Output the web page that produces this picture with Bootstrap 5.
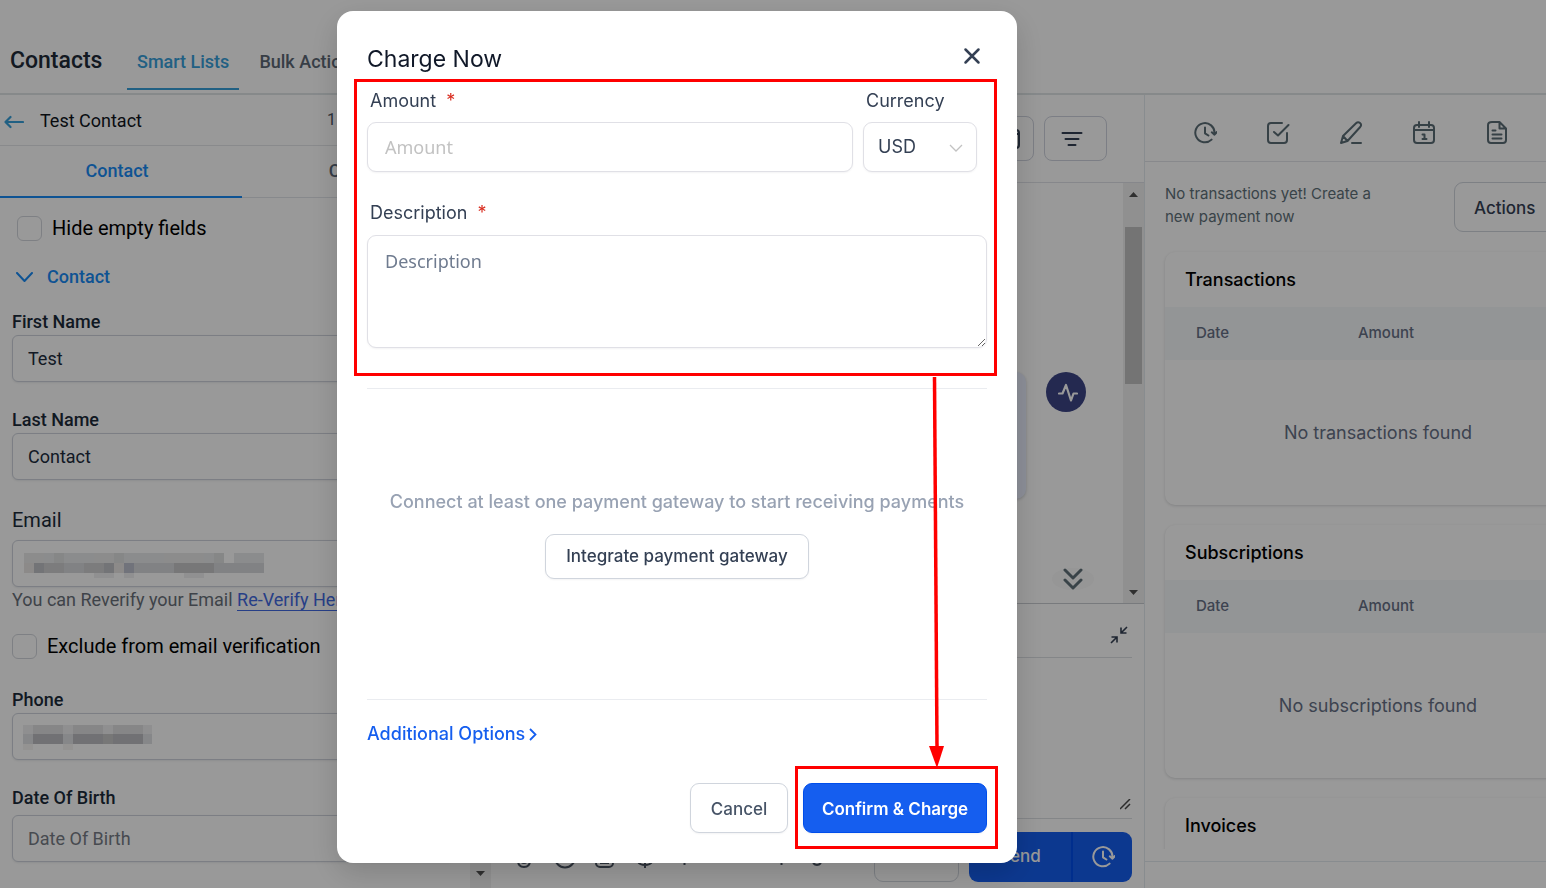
<!DOCTYPE html>
<html lang="en">
<head>
<meta charset="utf-8">
<meta name="viewport" content="width=device-width, initial-scale=1">
<title>Contacts - Charge Now</title>
<link href="https://cdn.jsdelivr.net/npm/bootstrap@5.3.0/dist/css/bootstrap.min.css" rel="stylesheet">
<style>
  body { font-family: Roboto, sans-serif; color: #1c2733; background: #fff; }
  svg { display: block; flex: none; }
  .inter { font-family: Inter, sans-serif; }
  .gap-10 { gap: 10px; }

  /* top bar */
  .topbar { flex: none; height: 95px; border-bottom: 2px solid #dfe5e7; padding: 0 0 3px 10px; }
  .topbar h1 { font-size: 23px; font-weight: 500; line-height: 30px; width: 117px; margin: 0 0 14px; color: #212b38; }
  .top-tab { font-size: 18px; font-weight: 500; line-height: 26px; padding: 0 10px 13px; color: #5d6875; border-bottom: 2px solid transparent; text-decoration: none; white-space: nowrap; }
  .top-tab.active { color: #38a0db; border-color: #38a0db; }

  /* contact form */
  .contact-pane { flex: 0 0 491px; font-size: 18px; }
  .pane-head { height: 51px; border-bottom: 1px solid #e4e6e9; padding-left: 4px; gap: 16px; color: #10151c; }
  .who { width: 271px; }
  .count { font-size: 16px; color: #4b5563; }
  .half-tab { flex: 0 0 242px; height: 52px; line-height: 50px; font-weight: 500; text-decoration: none; text-align: center; color: #5a6778; border-bottom: 1px solid #e2e5ea; }
  .half-tab.active { color: #188bf6; border-bottom: 2px solid #188bf6; }
  .form-area { padding: 18px 15px 0 12px; }
  .hide-row { padding-left: 5px; }
  .tick { appearance: none; width: 25px; height: 25px; margin: 0; border: 1px solid #d3d6dc; border-radius: 6px; background: #fff; flex: none; }
  .tick-label { font-size: 20px; line-height: 25px; color: #000; }
  .field { margin-bottom: 25px; }
  .field label { display: block; font-weight: 500; line-height: 26px; color: #1c2b3a; }
  .field label.roomy { padding-bottom: 4px; }
  .field label.title { font-size: 20px; font-weight: 400; padding: 2px 0 7px; }
  .field input { height: 47px; font-size: 18px; border: 1px solid #cfd3dc; border-radius: 6px; padding: 0 15px; color: #202b3c; box-shadow: 0 1px 2px rgba(16,24,40,.08); }
  .field input::placeholder { color: #777c85; opacity: 1; }
  .field.email { margin-bottom: 21px; }
  .section-row { margin: 23px 0 19px; gap: 14px; }
  .section-link { color: #188bf6; font-weight: 500; line-height: 26px; text-decoration: none; }
  .verify { line-height: 26px; color: #69707a; white-space: nowrap; }
  .verify a { color: #4169e1; text-decoration: none; border-bottom: 1px solid #4169e1; }
  .redacted { position: absolute; left: 11px; top: 12px; }
  .track { width: 21px; background: #f1f1f1; flex: none; }
  .track.tall { padding: 5px 0 4px; }

  /* conversation */
  .convo-pane { min-width: 0; }
  .convo-tools { height: 88px; border-bottom: 1px solid #e0e2e8; padding-right: 37px; }
  .tool-btn { width: 63px; height: 45px; border: 1px solid #cfd3de; border-radius: 8px; background: #fff; padding: 0; color: #344054; }
  .convo-list { height: 421px; border-bottom: 1px solid #c9ccd1; }
  .event-row { gap: 20px; padding: 189px 37px 0 0; }
  .jump-row { padding: 69px 29px 0 0; }
  .bubble { height: 127px; width: 400px; border-radius: 10px; background: #ebf0ff; box-shadow: 0 1px 3px rgba(16,24,40,.2); }
  .activity { width: 40px; height: 40px; border-radius: 50%; background: #3c4586; }
  .jump { width: 42px; height: 22px; border-radius: 50%; background: #fafafa; border: 0; padding: 0; color: #607179; }
  .thumb { width: 17px; height: 157px; background: #c1c1c1; margin-top: 30px; }
  .composer { margin-right: 12px; }
  .composer-head { height: 54px; border-bottom: 1px solid #dcdfe3; }
  .composer textarea { height: 161px; border: 0; border-bottom: 1px solid #dcdfe3; display: block; width: 100%; resize: none; }
  .composer-foot { height: 50px; margin-top: 13px; color: #4b5563; font-size: 17px; }
  .clear-btn { width: 85px; height: 50px; border: 1px solid #d0d5dd; border-radius: 9px; background: #fff; color: #475467; }
  .send-btn { height: 50px; background: #155eef; border: 0; color: #fff; font-weight: 500; font-size: 17px; padding: 0; }
  .send-main { width: 103px; border-radius: 9px 0 0 9px; border-right: 1px solid #004eeb; }
  .send-later { width: 60px; border-radius: 0 9px 9px 0; border-left: 1px solid #004eeb; }

  /* payments */
  .pay-pane { flex: 0 0 402px; border-left: 1px solid #e3e9ee; background: #fff; }
  .icon-row { flex: none; height: 67px; border-bottom: 1px solid #e3e5ea; padding: 10px 0 0 48px; gap: 49px; color: #5b6d76; }
  .icon-row button { border: 0; background: none; padding: 0; color: inherit; width: 24px; }
  .pay-body { width: 446px; padding: 20px 0 0 20px; }
  .pay-intro { font-size: 15px; line-height: 23px; width: 230px; color: #607179; margin: 0; }
  .actions-btn { width: 137px; height: 50px; border: 1px solid #d0d5dd; border-radius: 9px; background: #fff; font-size: 17px; font-weight: 500; color: #344054; text-align: left; padding: 3px 0 0 19px; }
  .pay-card { height: 253px; margin-bottom: 20px; border-radius: 10px; background: #fff; box-shadow: 0 1px 3px rgba(16,24,40,.16); overflow: hidden; }
  .pay-card h2 { font-size: 18px; font-weight: 500; line-height: 24px; height: 55px; padding: 16px 0 0 20px; margin: 0; color: #000; }
  .pay-card table { width: 100%; font-size: 15px; }
  .pay-card th { background: #f6f8fb; height: 53px; font-weight: 500; color: #667085; padding-left: 31px; width: 38%; }
  .pay-card td { height: 145px; text-align: center; font-size: 18px; color: #667085; }
  .pay-foot { border-top: 1px solid #e3e9ee; height: 27px; margin-top: 12px; flex: none; }

  /* dialog */
  .veil { position: fixed; inset: 0; background: rgba(0,0,0,.4); padding: 11px 192px 0 0; overflow: hidden; }
  .charge { width: 680px; margin: 0 auto; background: #fff; border-radius: 16px; padding: 30px; position: relative; font-size: 18px; color: #344054; box-shadow: 0 10px 30px rgba(0,0,0,.16); }
  .charge h2 { font-size: 23px; line-height: 36px; margin: 0; font-weight: 400; color: #101828; }
  .charge label { line-height: 24px; padding-left: 3px; }
  .charge .star { color: #d92d20; margin-left: 10px; }
  .close-x { border: 0; background: none; padding: 0 4px 6px; }
  .pay-row { gap: 10px; padding: 12px 10px 0 0; }
  .stack { gap: 9px; }
  .desc-row { gap: 10px; padding: 29px 0 40px; }
  .box { border: 1px solid #e0e0e6; border-radius: 9px; padding: 0 17px; font-family: "Noto Sans", sans-serif; font-size: 18px; box-shadow: 0 1px 2px rgba(16,24,40,.05); }
  .box::placeholder { color: #c2c2c2; opacity: 1; }
  .box-h { height: 50px; }
  textarea.box { height: 113px; padding-top: 12px; display: block; }
  textarea.box::placeholder { color: #6f7b8f; }
  select.box { font-family: Inter, sans-serif; width: 114px; padding: 0 14px 2px; color: #344054; background: #fff url("data:image/svg+xml,%3Csvg xmlns='http://www.w3.org/2000/svg' width='14' height='9' fill='none' stroke='%23c2c2c2' stroke-width='1.3'%3E%3Cpath d='M1 1l6 6 6-6'/%3E%3C/svg%3E") no-repeat right 13px top 21px; }
  .rule { border-top: 1px solid #eaecf0; }
  .gateway { height: 311px; padding-top: 101px; gap: 20px; }
  .gateway p { margin: 0; line-height: 24px; font-weight: 500; color: #98a2b3; }
  .more-row { padding: 22px 0 37px; }
  .dlg-foot { gap: 15px; }
  .dlg-btn { height: 50px; border: 1px solid #d0d5dd; border-radius: 9px; background: #fff; color: #344054; font-size: 17px; font-weight: 500; padding: 3px 0 0; box-shadow: 0 1px 2px rgba(16,24,40,.05); white-space: nowrap; }
  .dlg-btn.short { height: 45px; width: 264px; padding: 0; }
  .dlg-btn.cancel { width: 98px; color: #475467; }
  .dlg-btn.main { width: 184px; background: #155eef; border-color: #004eeb; color: #fff; font-weight: 600; }
  .more { color: #155eef; font-weight: 500; line-height: 24px; text-decoration: none; }
  .marks { position: absolute; left: 0; top: 0; pointer-events: none; }
</style>
</head>
<body>
<svg class="d-none">
  <symbol id="later" viewBox="0 0 24 24"><path d="M21.500 12.200A9.600 9.600 0 1 0 18.600 18.600M12 6.500v5.800l3.400 2.200M18.800 11.300l2.700 2.400 2.400-2.700" fill="none" stroke="currentColor" stroke-width="2" stroke-linecap="round" stroke-linejoin="round"/></symbol>
</svg>

<div class="vh-100 overflow-hidden d-flex flex-column">
  <header class="topbar d-flex align-items-end">
    <h1>Contacts</h1>
    <nav class="d-flex gap-10">
      <a href="#" class="top-tab active">Smart Lists</a>
      <a href="#" class="top-tab">Bulk Actions</a>
    </nav>
  </header>

  <div class="d-flex flex-grow-1 overflow-hidden">
    <section class="contact-pane d-flex flex-column">
      <div class="pane-head d-flex align-items-center">
        <svg width="20" height="16" viewBox="0 0 20 16" fill="none" stroke="#38a0db" stroke-width="2.200" stroke-linecap="round" stroke-linejoin="round" class="mt-1"><path d="M19 8H1.500M6.500 3L1.500 8l5 5"/></svg>
        <span class="who">Test Contact</span>
        <span class="count">1 of 1</span>
      </div>
      <div class="d-flex">
        <a href="#" class="half-tab active"><span class="pe-2">Contact</span></a>
        <a href="#" class="half-tab"><span class="ps-2">Company</span></a>
      </div>
      <div class="d-flex flex-grow-1 overflow-hidden">
        <form class="form-area flex-grow-1">
          <div class="hide-row d-flex gap-10">
            <input class="tick" type="checkbox" id="hide"><label class="tick-label" for="hide">Hide empty fields</label>
          </div>
          <div class="section-row d-flex align-items-center ps-1">
            <svg width="17" height="11" viewBox="0 0 17 11" fill="none" stroke="#188bf6" stroke-width="2" stroke-linecap="round" stroke-linejoin="round"><path d="M1 1l7.500 8L16 1"/></svg>
            <a href="#" class="section-link">Contact</a>
          </div>
          <div class="field"><label for="fn">First Name</label><input class="w-100" id="fn" value="Test"></div>
          <div class="field"><label for="ln">Last Name</label><input class="w-100" id="ln" value="Contact"></div>
          <div class="field email">
            <label for="em" class="title">Email</label>
            <div class="position-relative"><input class="w-100 d-block" id="em">
              <svg class="redacted" width="242" height="26" shape-rendering="crispEdges">
                <path fill="#eaeaea" d="M1 1h20v10H1zM71 1h30v10H71zM141 1h40v10H141z"/><path fill="#dfe1e2" d="M31 1h10v10H31zM191 1h10v10H191zM111 1h10v10H111zM91 1h10v10H91z"/><path fill="#e8eaec" d="M21 1h10v10H21zM41 1h30v10H41zM101 1h40v10H101zM181 1h10v10H181zM211 1h30v10H211z"/>
                <path fill="#e9e7e5" d="M1 11h10v10H1zM91 11h10v10H91z"/><path fill="#cfcfd1" d="M11 11h50v10H11zM61 11h30v10H61z"/><path fill="#d8d9dd" d="M41 11h20v10H41zM111 11h40v10H111zM191 11h50v10H191z"/><path fill="#c0c1c6" d="M11 11h10v10H11zM81 11h10v10H81z"/><path fill="#bdc0ce" d="M101 11h10v10H101z"/><path fill="#c6c6c8" d="M151 11h40v10H151z"/><path fill="#f1f1f2" d="M71 21h20v5H71zM101 21h10v5H101zM161 21h20v5H161z"/>
              </svg>
            </div>
            <div class="verify">You can Reverify your Email <a href="#">Re-Verify Here</a></div>
          </div>
          <div class="d-flex gap-10 mb-4">
            <input class="tick" type="checkbox" id="excl"><label class="tick-label" for="excl">Exclude from email verification</label>
          </div>
          <div class="field pt-1"><label for="ph">Phone</label>
            <div class="position-relative"><input class="w-100 d-block" id="ph">
              <svg class="redacted" width="131" height="28" shape-rendering="crispEdges">
                <path fill="#efeff1" d="M0 0h10v9H0zM40 0h10v9H40zM80 0h10v9H80zM120 0h9v9h-9z"/><path fill="#dfe0e2" d="M10 0h30v9H10zM50 0h30v9H50zM90 0h30v9H90z"/><path fill="#e0e1e4" d="M0 9h10v10H0zM40 9h10v10H40zM120 9h9v10h-9z"/><path fill="#bdbdc2" d="M10 9h30v10H10zM50 9h30v10H50zM90 9h30v10H90z"/><path fill="#c6c6c6" d="M80 9h10v10H80z"/><path fill="#f7f5f4" d="M0 19h10v6H0zM40 19h10v6H40z"/>
              </svg>
            </div>
          </div>
          <div class="field"><label for="dob" class="roomy">Date Of Birth</label><input class="w-100" id="dob" placeholder="Date Of Birth"></div>
        </form>
        <div class="track d-flex flex-column align-items-center justify-content-end pb-2"><svg width="9" height="5" class="mb-1"><path d="M0 0h9L4.500 5z" fill="#505050"/></svg></div>
      </div>
    </section>

    <section class="convo-pane flex-grow-1 d-flex flex-column inter">
      <div class="convo-tools d-flex align-items-center justify-content-end gap-10">
        <button class="tool-btn d-flex align-items-center justify-content-end pe-2" type="button" aria-label="Archive"><svg width="24" height="20" class="me-1" viewBox="0 0 24 20" fill="none" stroke="currentColor" stroke-width="2"><rect x="2" y="1" width="20" height="18" rx="3"/><path d="M2 5h20"/></svg></button>
        <button class="tool-btn d-flex align-items-center justify-content-center pe-2" type="button" aria-label="Filter"><svg width="22" height="16" fill="none" stroke="currentColor" stroke-width="2" stroke-linecap="round"><path d="M1.500 2h19M4.500 8h13M7.500 14h7"/></svg></button>
      </div>
      <div class="convo-list d-flex">
        <div class="flex-grow-1 overflow-hidden">
          <div class="event-row d-flex justify-content-end">
            <div class="bubble"></div>
            <div class="activity d-flex align-items-center justify-content-center"><svg width="20" height="20" fill="none" stroke="#fff" stroke-width="2.200" stroke-linecap="round" stroke-linejoin="round" class="ms-1"><path d="M1 11.500h3.500L8 3l5 15.500 2.500-7H19"/></svg></div>
          </div>
          <div class="jump-row d-flex justify-content-end">
            <button class="jump d-flex align-items-center justify-content-center" type="button" aria-label="Jump to latest"><svg width="20" height="22" fill="none" stroke="currentColor" stroke-width="3" stroke-linecap="round" stroke-linejoin="round"><path d="M2 2l8 8 8-8M2 12l8 8 8-8"/></svg></button>
          </div>
        </div>
        <div class="track tall d-flex flex-column align-items-center">
          <svg width="9" height="5" class="mt-1"><path d="M0 5h9L4.500 0z" fill="#505050"/></svg>
          <div class="thumb"></div>
          <svg width="9" height="5" class="mt-auto mb-1"><path d="M0 0h9L4.500 5z" fill="#505050"/></svg>
        </div>
      </div>
      <div class="composer">
        <div class="composer-head d-flex align-items-center justify-content-end pt-2 pe-1"><svg width="18" height="18" fill="none" stroke="#344054" stroke-width="1.600"><path d="M17 1l-6 6M11 1.500V7h5.500M1 17l6-6M1.500 11H7v5.500"/></svg></div>
        <div class="position-relative">
          <textarea aria-label="Message"></textarea>
          <svg class="position-absolute bottom-0 end-0 mb-2" width="12" height="12" stroke="#4a4a4a" stroke-width="1.500"><path d="M0 10L10 0M5 10l5-5"/></svg>
        </div>
        <div class="composer-foot d-flex align-items-center justify-content-end gap-10">
          <svg width="340" height="22" fill="none" stroke="currentColor" stroke-width="2" class="me-auto ms-4 mt-1"><path d="M3 6v6q0 7 6 7t6-7V6M6 10v2q0 3 3 3t3-3v-2"/><circle cx="50" cy="9.500" r="10"/><rect x="81" y="2" width="17" height="17" rx="4"/><path d="M85 15h9M123 14q2 3 7 3t7-3M130 6v14M169.500 10v7M266.500 12v5M298 15q4 4 8 0"/></svg>
          <button class="clear-btn" type="button">Clear</button>
          <div class="d-flex">
            <button class="send-btn send-main" type="button">Send</button>
            <button class="send-btn send-later d-flex align-items-center justify-content-center" type="button" aria-label="Schedule"><svg width="24" height="24"><use href="#later"/></svg></button>
          </div>
        </div>
      </div>
    </section>

    <aside class="pay-pane overflow-hidden inter d-flex flex-column">
      <div class="icon-row d-flex align-items-center">
        <button type="button" aria-label="Schedule"><svg width="24" height="24"><use href="#later"/></svg></button>
        <button type="button" aria-label="Tasks"><svg width="24" height="24" fill="none" stroke="currentColor" stroke-width="2" stroke-linecap="round" stroke-linejoin="round"><path d="M16 2H5Q2 2 2 5v14q0 3 3 3h13q3 0 3-3v-7M8 11l4 3.500L22.500 4"/></svg></button>
        <button type="button" aria-label="Notes"><svg width="24" height="24" fill="none" stroke="currentColor" stroke-width="2" stroke-linecap="round" stroke-linejoin="round"><path d="M2 22l2-7L17 2.300q2-2 4-.300t.200 4L8.500 20 2 22M4 15l4.500 5M13 22h9"/></svg></button>
        <button type="button" aria-label="Appointments"><svg width="24" height="24" fill="none" stroke="currentColor" stroke-width="2" stroke-linecap="round" stroke-linejoin="round"><rect x="2" y="4" width="20" height="18" rx="3"/><path d="M2 9h20M7 1v5M17 1v5M10.500 13.500h2V18M10.500 18h4"/></svg></button>
        <button type="button" aria-label="Documents"><svg width="24" height="24" fill="none" stroke="currentColor" stroke-width="2" stroke-linecap="round" stroke-linejoin="round"><path d="M14.500 1H7Q3 1 3 4v15q0 3 3 3h12q3 0 3-3V7.500zV7.500H21M7.500 9.500h3M7.500 13.500h9M7.500 17.500h9"/></svg></button>
      </div>
      <div class="pay-body flex-grow-1 overflow-hidden">
        <div class="d-flex justify-content-between mb-3 pb-1">
          <p class="pay-intro">No transactions yet! Create a new payment now</p>
          <button class="actions-btn" type="button">Actions</button>
        </div>
        <div class="pay-card">
          <h2>Transactions</h2>
          <table><thead><tr><th>Date</th><th>Amount</th><th></th></tr></thead><tbody><tr><td colspan="3">No transactions found</td></tr></tbody></table>
        </div>
        <div class="pay-card">
          <h2>Subscriptions</h2>
          <table><thead><tr><th>Date</th><th>Amount</th><th></th></tr></thead><tbody><tr><td colspan="3">No subscriptions found</td></tr></tbody></table>
        </div>
        <div class="pay-card"><h2>Invoices</h2></div>
      </div>
      <div class="pay-foot"></div>
    </aside>
  </div>
</div>

<div class="veil">
  <div class="charge inter" role="dialog" aria-labelledby="dlg-title">
    <div class="d-flex justify-content-between">
      <h2 id="dlg-title">Charge Now</h2>
      <button type="button" class="close-x" aria-label="Close"><svg width="22" height="22" fill="none" stroke="#344054" stroke-width="2.500" stroke-linecap="round"><path d="M4.500 4.500l13 13M17.500 4.500l-13 13"/></svg></button>
    </div>
    <form>
      <div class="pay-row d-flex">
        <div class="stack flex-grow-1 d-flex flex-column">
          <label for="amt">Amount<span class="star">*</span></label>
          <input class="box box-h w-100" id="amt" placeholder="Amount">
        </div>
        <div class="stack d-flex flex-column">
          <label for="cur">Currency</label>
          <select class="box box-h form-select" id="cur"><option>USD</option></select>
        </div>
      </div>
      <div class="desc-row d-flex flex-column">
        <label for="desc">Description<span class="star">*</span></label>
        <textarea class="box w-100" id="desc" placeholder="Description"></textarea>
      </div>
      <div class="rule gateway d-flex flex-column align-items-center">
        <p>Connect at least one payment gateway to start receiving payments</p>
        <button type="button" class="dlg-btn short">Integrate payment gateway</button>
      </div>
      <div class="rule more-row d-flex align-items-center">
        <a href="#" class="more">Additional Options</a>
        <svg class="ms-1" width="8" height="13" fill="none" stroke="#155eef" stroke-width="1.800"><path d="M1 1l5.500 5.500L1 12"/></svg>
      </div>
      <div class="dlg-foot d-flex justify-content-end">
        <button type="button" class="dlg-btn cancel">Cancel</button>
        <button type="button" class="dlg-btn main">Confirm &amp; Charge</button>
      </div>
    </form>
    <svg class="marks" width="680" height="852" fill="none" stroke="#f00" stroke-width="3">
      <rect x="18.500" y="69.500" width="640" height="294"/>
      <rect x="459.500" y="756.500" width="200" height="80"/>
      <path d="M597.500 366L600 736" stroke-width="3.500"/>
      <path d="M592 735h15l-7 22z" fill="#f00" stroke="none"/>
    </svg>
  </div>
</div>
<script src="https://cdn.jsdelivr.net/npm/bootstrap@5.3.0/dist/js/bootstrap.bundle.min.js"></script>
</body>
</html>
